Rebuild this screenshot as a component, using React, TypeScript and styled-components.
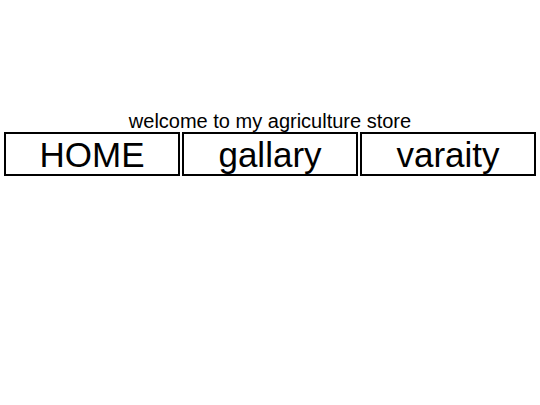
import { createGlobalStyle, styled } from "styled-components";

const GlobalStyle = createGlobalStyle`
  body {
    margin: 0;
    background: #fff;
    font-family: "Liberation Sans", Arial, sans-serif;
  }
`;

const LINKS = ["HOME", "gallary", "varaity"];

function App() {
  return (
    <>
      <GlobalStyle />
      <Page>
        <Heading>welcome to my agriculture store</Heading>
        <Nav>
          {LINKS.map((link) => (
            <NavItem key={link}>{link}</NavItem>
          ))}
        </Nav>
      </Page>
    </>
  );
}

const Page = styled("div")`
  padding: 110px 4px 0;
`;

const Heading = styled("h1")`
  margin: 0;
  height: 22px;
  line-height: 22px;
  text-align: center;
  font-size: 20px;
  font-weight: 400;
  color: #000;
`;

const Nav = styled("div")`
  display: flex;
  gap: 2px;
`;

const NavItem = styled("div")`
  flex: 1;
  border: 2px solid #000;
  height: 38px;
  padding-top: 2px;
  line-height: 38px;
  text-align: center;
  font-size: 35px;
  color: #000;
`;

export default App;
